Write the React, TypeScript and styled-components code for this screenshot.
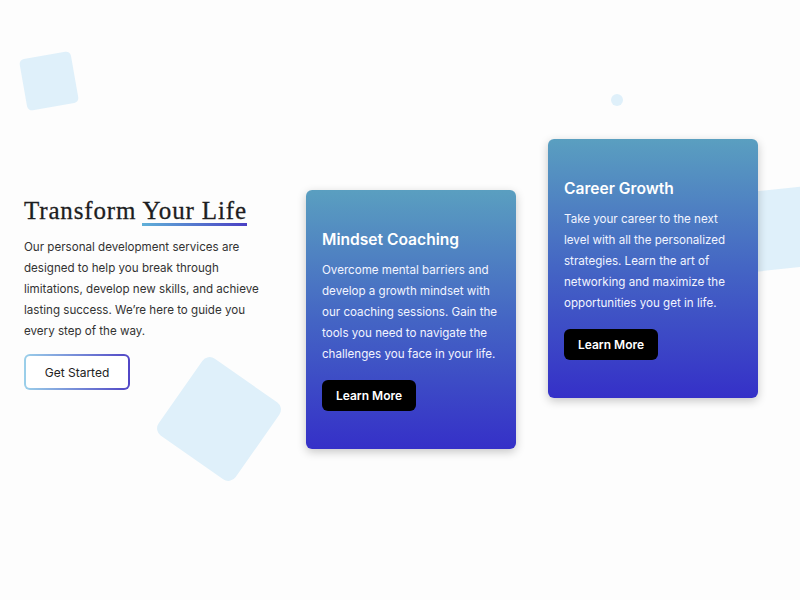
import React from 'react';
import styled, { createGlobalStyle } from 'styled-components';

const GlobalStyle = createGlobalStyle`
  html, body {
    margin: 0;
    padding: 0;
    background: #fdfdfd;
  }
  * {
    box-sizing: border-box;
  }
`;

const Page = styled.main`
  position: relative;
  overflow: hidden;
  width: 100%;
  height: 100vh;
  display: flex;
  align-items: center;
  gap: 32px;
  padding: 0 0 12px 24px;
  font-family: Inter, 'Noto Sans', sans-serif;
`;

// decorative background blobs
const Shape = styled.div<{ $size: number; $rotate: number; $round?: boolean }>`
  position: absolute;
  width: ${({ $size }) => $size}px;
  height: ${({ $size }) => $size}px;
  background: #dff0fa;
  border-radius: ${({ $round, $size }) => ($round ? '50%' : `${Math.round($size / 10)}px`)};
  transform: rotate(${({ $rotate }) => $rotate}deg);
  z-index: 0;
`;

const Intro = styled.section`
  position: relative;
  z-index: 1;
  width: 250px;
  flex-shrink: 0;
  padding-bottom: 2px;
`;

const Heading = styled.h1`
  margin: 0 0 11px;
  font-family: 'Liberation Serif', 'DejaVu Serif', serif;
  font-size: 25px;
  font-weight: 400;
  letter-spacing: 0.85px;
  line-height: 1.2;
  color: #1d1d1f;
  -webkit-text-stroke: 0.3px #1d1d1f;
`;

const Accent = styled.span`
  background-image: linear-gradient(90deg, #5fb0d8, #4a3fc4);
  background-repeat: no-repeat;
  background-size: 100% 3px;
  background-position: 0 100%;
  padding-bottom: 2px;
`;

const Lead = styled.p`
  margin: 0 0 12px;
  font-size: 11.6px;
  line-height: 21px;
  color: #333;
`;

const OutlineButton = styled.button`
  width: 106px;
  height: 36px;
  border: 2px solid transparent;
  border-radius: 6px;
  background:
    linear-gradient(#fff, #fff) padding-box,
    linear-gradient(90deg, #9bd0ea, #5146c6) border-box;
  font-family: inherit;
  font-size: 12px;
  color: #222;
  cursor: pointer;
`;

const Cards = styled.div`
  position: relative;
  z-index: 1;
  display: flex;
  align-items: flex-start;
  gap: 32px;
`;

const Card = styled.article<{ $offset: number }>`
  width: 210px;
  margin-top: ${({ $offset }) => $offset}px;
  padding: 38px 16px 38px;
  border-radius: 6px;
  background: linear-gradient(180deg, #5a9fc0 0%, #4465c4 50%, #3530c8 100%);
  box-shadow: 0 3px 10px rgba(0, 0, 0, 0.22);
  color: #fff;
`;

const CardTitle = styled.h2`
  margin: 0 0 8px;
  font-size: 15.6px;
  font-weight: 600;
  line-height: 24px;
`;

const CardText = styled.p`
  margin: 0 0 15px;
  font-size: 11.6px;
  line-height: 21px;
  color: #f2f4ff;
`;

const SolidButton = styled.button`
  width: 94px;
  height: 31px;
  border: none;
  border-radius: 6px;
  background: #000;
  color: #fff;
  font-family: inherit;
  font-size: 12px;
  font-weight: 600;
  cursor: pointer;
`;

const cards = [
  {
    title: 'Mindset Coaching',
    text: 'Overcome mental barriers and develop a growth mindset with our coaching sessions. Gain the tools you need to navigate the challenges you face in your life.',
    offset: 51,
  },
  {
    title: 'Career Growth',
    text: 'Take your career to the next level with all the personalized strategies. Learn the art of networking and maximize the opportunities you get in life.',
    offset: 0,
  },
];

export default function App() {
  return (
    <>
      <GlobalStyle />
      <Page>
        <Shape $size={52} $rotate={-10} style={{ left: 23, top: 55 }} />
        <Shape $size={12} $rotate={0} $round style={{ left: 611, top: 94 }} />
        <Shape $size={94} $rotate={35} style={{ left: 172, top: 372 }} />
        <Shape $size={80} $rotate={-6} style={{ left: 740, top: 189 }} />

        <Intro>
          <Heading>
            Transform <Accent>Your Life</Accent>
          </Heading>
          <Lead>
            Our personal development services are designed to help you break through
            limitations, develop new skills, and achieve lasting success. We’re here to
            guide you every step of the way.
          </Lead>
          <OutlineButton>Get Started</OutlineButton>
        </Intro>

        <Cards>
          {cards.map((c) => (
            <Card key={c.title} $offset={c.offset}>
              <CardTitle>{c.title}</CardTitle>
              <CardText>{c.text}</CardText>
              <SolidButton>Learn More</SolidButton>
            </Card>
          ))}
        </Cards>
      </Page>
    </>
  );
}
